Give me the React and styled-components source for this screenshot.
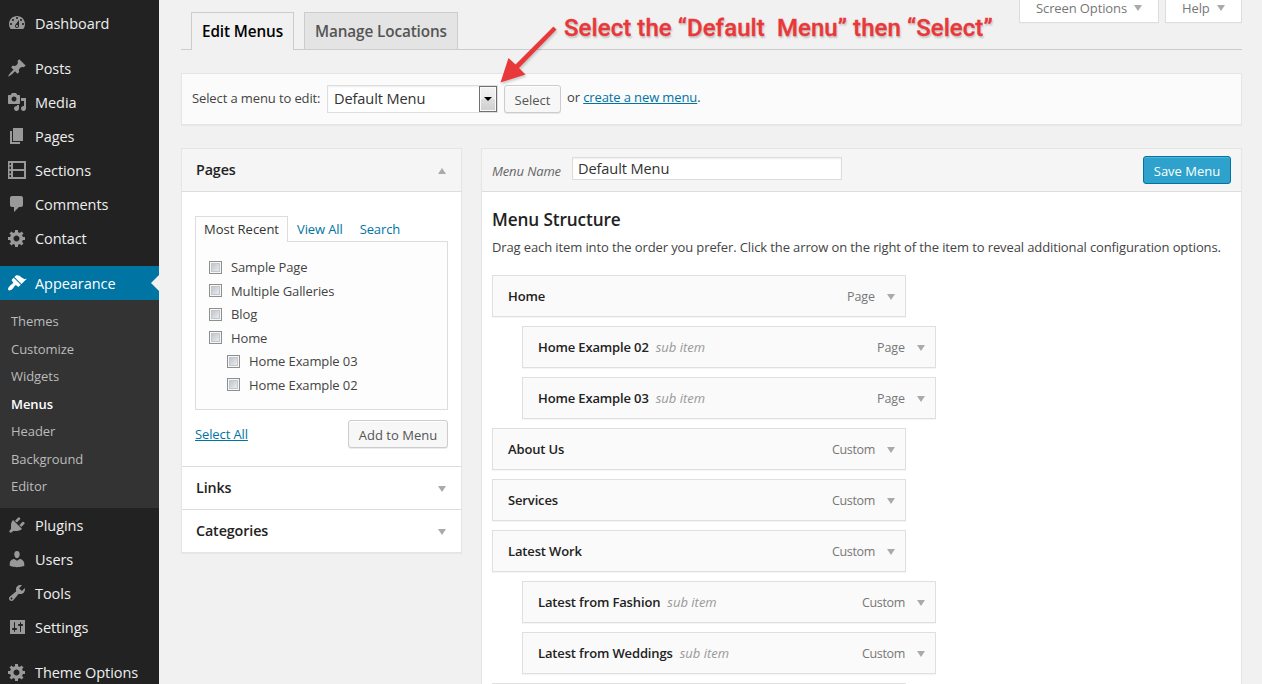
import React from "react";
import styled, { createGlobalStyle, css } from "styled-components";

const Global = createGlobalStyle`
  *, *::before, *::after { box-sizing: border-box; }
  html, body { margin: 0; padding: 0; }
  body {
    background: #f1f1f1;
    color: #444;
    font: 13px/18px "Open Sans", "Noto Sans", sans-serif;
    letter-spacing: -0.115px;
    overflow: hidden;
  }
  h2, h3, p, ul { margin: 0; padding: 0; font-weight: 400; }
  ul { list-style: none; }
`;

const Shell = styled.div`
  position: relative;
  display: flex;
  width: 1262px;
  height: 684px;
  overflow: hidden;
`;

const Sidebar = styled.nav`
  flex: none;
  width: 159px;
  height: 700px;
  padding-top: 6px;
  background: #222;
  letter-spacing: -0.05px;
`;

const MenuGroup = styled.div`
  margin-bottom: 11px;
`;

const MenuLink = styled.div`
  position: relative;
  display: flex;
  align-items: center;
  height: 34px;
  padding-left: 7px;
  gap: 8px;
  font-size: 14.5px;
  line-height: 34px;
  color: ${(p) => (p.$current ? "#fff" : "#eee")};
  background: ${(p) => (p.$current ? "#0074a2" : "transparent")};
  svg { flex: none; fill: ${(p) => (p.$current ? "#fff" : "#999")}; }
`;

const MenuText = styled.span`
  padding-top: 1px;
  line-height: 33px;
`;

const CurrentNotch = styled.span`
  position: absolute;
  right: 0;
  top: 9px;
  border: 8px solid transparent;
  border-left: 0;
  border-right-color: #f1f1f1;
`;

const SubMenu = styled.ul`
  height: 208px;
  padding: 7px 0 0 11px;
  background: #333;
`;

const SubItem = styled.li`
  height: 27.5px;
  line-height: 28px;
  font-size: 13px;
  color: ${(p) => (p.$current ? "#fff" : "#bbb")};
  font-weight: ${(p) => (p.$current ? 600 : 400)};
`;

const Content = styled.main`
  flex: 1;
  min-width: 0;
  display: flex;
  flex-direction: column;
  padding: 0 20px 0 22px;
  > * { flex-shrink: 0; }
`;

const TopBar = styled.header`
  display: flex;
  align-items: flex-end;
  height: 50px;
  padding-left: 10px;
  border-bottom: 1px solid #ccc;
`;

const NavTab = styled.a`
  height: ${(p) => (p.$active ? "38px" : "37px")};
  margin: 0 10px ${(p) => (p.$active ? "-1px" : "0")} 0;
  width: ${(p) => p.$width}px;
  padding: 0 10px;
  border: 1px solid #ccc;
  border-bottom: 0;
  background: ${(p) => (p.$active ? "#f1f1f1" : "#e4e4e4")};
  color: ${(p) => (p.$active ? "#000" : "#555")};
  font-size: 15.3px;
  font-weight: 600;
  line-height: 37px;
  white-space: nowrap;
`;

const ScreenLinks = styled.div`
  align-self: flex-start;
  display: flex;
  gap: 6px;
  margin-left: auto;
`;

const ScreenLink = styled.a`
  display: flex;
  align-items: center;
  justify-content: space-between;
  width: ${(p) => p.$width}px;
  height: 23px;
  padding: 0 16px 6px;
  border: 1px solid #ddd;
  border-top: 0;
  background: #fff;
  box-shadow: 0 1px 1px -1px rgba(0, 0, 0, 0.1);
  color: #777;
  white-space: nowrap;
`;

const Caret = styled.span`
  flex: none;
  width: 0;
  height: 0;
  border: 4px solid transparent;
  ${(p) =>
    p.$up
      ? css`border-top: 0; border-bottom: 6px solid #aaa;`
      : css`border-bottom: 0; border-top: 6px solid #aaa;`}
`;

const ManageBar = styled.section`
  display: flex;
  align-items: center;
  height: 52px;
  margin-top: 23px;
  padding: 0 10px;
  border: 1px solid #e5e5e5;
  background: #fbfbfb;
  box-shadow: 0 1px 1px rgba(0, 0, 0, 0.04);
  white-space: nowrap;
`;

const ManageLabel = styled.span`
  width: 129px;
  padding-bottom: 2px;
`;

const SelectBox = styled.div`
  display: flex;
  align-items: stretch;
  width: 171px;
  height: 28px;
  margin: 0 6px 0 6px;
  border: 1px solid #ddd;
  background: #fff;
  box-shadow: inset 0 1px 2px rgba(0, 0, 0, 0.07);
  color: #333;
  font-size: 14.6px;
  line-height: 25px;
`;

const SelectValue = styled.span`
  flex: 1;
  padding-left: 6px;
`;

const SelectArrow = styled.span`
  display: flex;
  align-items: center;
  justify-content: center;
  width: 18px;
  border: 1px solid #707070;
  background: linear-gradient(#f2f2f2 0%, #ebebeb 50%, #dddddd 50%, #cfcfcf 100%);
  box-shadow: inset 0 0 0 1px #fafafa;
  &::after {
    content: "";
    border: 4px solid transparent;
    border-top-color: #000;
    border-bottom: 0;
  }
`;

const Button = styled.button`
  height: 28px;
  width: ${(p) => p.$width}px;
  padding: 1px 0 0;
  border: 1px solid ${(p) => (p.$primary ? "#0074a2" : "#ccc")};
  border-radius: 3px;
  background: ${(p) => (p.$primary ? "#2ea2cc" : "#f7f7f7")};
  box-shadow: ${(p) =>
    p.$primary
      ? "inset 0 1px 0 rgba(120, 200, 230, 0.5)"
      : "inset 0 1px 0 #fff, 0 1px 0 rgba(0, 0, 0, 0.08)"};
  color: ${(p) => (p.$primary ? "#fff" : "#555")};
  font: 13px/26px "Open Sans", "Noto Sans", sans-serif;
  white-space: nowrap;
`;

const TextLink = styled.a`
  color: #0074a2;
  text-decoration: underline;
`;

const OrText = styled.span`
  margin: -5px 0 0 6px;
`;

const Columns = styled.div`
  display: flex;
  align-items: flex-start;
  gap: 19px;
  margin-top: 23px;
`;

const Accordion = styled.aside`
  flex: none;
  width: 281px;
  border: 1px solid #e5e5e5;
  background: #fff;
  box-shadow: 0 1px 1px rgba(0, 0, 0, 0.04);
`;

const AccordionHead = styled.h3`
  display: flex;
  align-items: center;
  justify-content: space-between;
  height: ${(p) => (p.$first ? "42px" : "43px")};
  padding: 0 15px ${(p) => (p.$first ? "0" : "1px")} 14px;
  border-top: ${(p) => (p.$first ? "0" : "1px solid #ddd")};
  background: ${(p) => (p.$first ? "#f5f5f5" : "#fff")};
  color: #222;
  font-size: 14.3px;
  font-weight: 600;
  ${Caret} { margin-top: 2px; }
`;

const AccordionBody = styled.div`
  height: 275px;
  padding: 24px 13px 0;
  border-top: 1px solid #ddd;
`;

const TabRow = styled.div`
  display: flex;
  height: 26px;
  line-height: 26px;
  color: #0074a2;
  white-space: nowrap;
`;

const SmallTab = styled.a`
  position: relative;
  padding: 0 8px 0 9px;
  ${(p) =>
    p.$active &&
    css`
      width: 93px;
      padding: 0 8px;
      border: 1px solid #ddd;
      border-bottom: 0;
      background: #fdfdfd;
      color: #333;
      line-height: 25px;
      letter-spacing: -0.02px;
    `}
`;

const CheckPanel = styled.ul`
  height: 169px;
  margin-top: -1px;
  padding: 13.3px 13px 0;
  border: 1px solid #ddd;
  background: #fdfdfd;
`;

const CheckRow = styled.li`
  display: flex;
  align-items: center;
  gap: 9px;
  height: 23.5px;
  margin-left: ${(p) => (p.$child ? "18px" : "0")};
`;

const CheckBox = styled.span`
  width: 13px;
  height: 13px;
  border: 1px solid #8e8f8f;
  background: linear-gradient(135deg, #b5bcc4, #f4f5f6) padding-box;
  box-shadow: inset 0 0 0 1px #f6f6f6, inset 0 0 0 2px #c4c8cc;
`;

const PanelActions = styled.div`
  display: flex;
  align-items: center;
  justify-content: space-between;
  margin-top: 10px;
`;

const Editor = styled.section`
  flex: 1;
  min-width: 0;
  height: 560px;
  border: 1px solid #e5e5e5;
  background: #fff;
  box-shadow: 0 1px 1px rgba(0, 0, 0, 0.04);
`;

const EditorHead = styled.div`
  display: flex;
  align-items: center;
  height: 43px;
  padding: 0 10px;
  border-bottom: 1px solid #ddd;
  background: #f5f5f5;
`;

const NameLabel = styled.label`
  width: 80px;
  padding-top: 2px;
  color: #666;
  font-style: italic;
`;

const NameField = styled.div`
  width: 270px;
  height: 23px;
  margin: -4px auto 0 0;
  padding-left: 5px;
  border: 1px solid #ddd;
  background: #fff;
  box-shadow: inset 0 1px 2px rgba(0, 0, 0, 0.07);
  color: #333;
  font-size: 14.6px;
  line-height: 21px;
`;

const EditorBody = styled.div`
  padding: 17px 10px 0;
`;

const Heading = styled.h2`
  color: #222;
  font-size: 17.2px;
  font-weight: 600;
  line-height: 22px;
`;

const Hint = styled.p`
  margin: 7px 0 19px;
  white-space: nowrap;
`;

const ItemList = styled.ul`
  display: flex;
  flex-direction: column;
  gap: 9px;
`;

const Item = styled.li`
  display: flex;
  align-items: center;
  width: 414px;
  height: 42px;
  margin-left: ${(p) => (p.$sub ? "30px" : "0")};
  padding: 0 10px 0 15px;
  border: 1px solid #dfdfdf;
  background: #fafafa;
  box-shadow: 0 1px 1px rgba(0, 0, 0, 0.04);
  ${Caret} { margin-top: 2px; }
`;

const ItemTitle = styled.span`
  color: #222;
  font-weight: 600;
  letter-spacing: -0.14px;
`;

const SubLabel = styled.span`
  margin-left: 7px;
  color: #999;
  font-style: italic;
  letter-spacing: 0;
`;

const ItemType = styled.span`
  margin: 1px 12px 0 auto;
  color: #777;
  font-size: 12.5px;
  letter-spacing: ${(p) => (p.$tight ? "-0.33px" : "-0.05px")};
`;

const Callout = styled.div`
  position: absolute;
  left: 564px;
  top: 12px;
  color: #e8383a;
  font: 500 24px/32px Roboto, sans-serif;
  letter-spacing: 0.07px;
  white-space: pre;
  -webkit-text-stroke: 0.35px #e8383a;
  text-shadow: 1px 2px 2px rgba(0, 0, 0, 0.2);
`;

const CalloutArrow = styled.svg`
  position: absolute;
  left: 494px;
  top: 20px;
  fill: #e8383a;
  filter: drop-shadow(1px 2px 1px rgba(0, 0, 0, 0.18));
`;

const iconPaths = {
  dashboard:
    "M3.76 16h12.48c1.1-1.37 1.76-3.11 1.76-5 0-4.42-3.58-8-8-8s-8 3.58-8 8c0 1.89.66 3.63 1.76 5zM10 4c.55 0 1 .45 1 1s-.45 1-1 1-1-.45-1-1 .45-1 1-1zM6 6c.55 0 1 .45 1 1s-.45 1-1 1-1-.45-1-1 .45-1 1-1zm8 0c.55 0 1 .45 1 1s-.45 1-1 1-1-.45-1-1 .45-1 1-1zm-5.37 5.55L12 7v6c0 1.1-.9 2-2 2s-2-.9-2-2c0-.57.24-1.08.63-1.45zM4 10c.55 0 1 .45 1 1s-.45 1-1 1-1-.45-1-1 .45-1 1-1zm12 0c.55 0 1 .45 1 1s-.45 1-1 1-1-.45-1-1 .45-1 1-1zm-5 3c0-.55-.45-1-1-1s-1 .45-1 1 .45 1 1 1 1-.45 1-1z",
  pin: "M10.44 3.02l1.82-1.82 6.36 6.35-1.83 1.82c-1.05-.68-2.48-.57-3.41.36l-.75.75c-.92.93-1.04 2.35-.35 3.41l-1.83 1.82-2.41-2.41-2.8 2.79c-.42.42-3.38 2.71-3.8 2.29s1.86-3.39 2.28-3.81l2.79-2.79L4.1 9.36l1.83-1.82c1.05.69 2.48.57 3.4-.36l.75-.75c.93-.92 1.05-2.35.36-3.41z",
  media:
    "M13 11V4c0-.55-.45-1-1-1h-1.67L9 1H5L3.67 3H2c-.55 0-1 .45-1 1v7c0 .55.45 1 1 1h10c.55 0 1-.45 1-1zM7 4.5c1.38 0 2.5 1.12 2.5 2.5S8.38 9.5 7 9.5 4.5 8.38 4.5 7 5.62 4.5 7 4.5zM14 6h5v10.5c0 1.38-1.12 2.5-2.5 2.5S14 17.88 14 16.5s1.12-2.5 2.5-2.5c.17 0 .34.02.5.05V9h-3V6zm-4 8.05V13h2v3.5c0 1.38-1.12 2.5-2.5 2.5S7 17.88 7 16.5 8.12 14 9.5 14c.17 0 .34.02.5.05z",
  page: "M6 15V2h10v13H6zm-1 1h8v2H3V5h2v11z",
  sections:
    "M1 1h18v18H1zM2.5 3v2h1.5V3zM2.5 6.5v2.5h1.5V6.5zM2.5 11v2.5h1.5V11zM2.5 15v2h1.5v-2zM6 3v6h11V3zM6 11v6h11v-6z",
  comment:
    "M5 2h9c1.1 0 2 .9 2 2v7c0 1.1-.9 2-2 2h-2l-5 5v-5H5c-1.1 0-2-.9-2-2V4c0-1.1.9-2 2-2z",
  gear: "M18 12h-2.18c-.17.7-.44 1.35-.81 1.93l1.54 1.54-2.1 2.1-1.54-1.54c-.58.36-1.23.63-1.91.79V19H8v-2.18c-.68-.16-1.33-.43-1.91-.79l-1.54 1.54-2.12-2.12 1.54-1.54c-.36-.58-.63-1.23-.79-1.91H1V9.03h2.17c.16-.7.44-1.35.8-1.94L2.43 5.55l2.1-2.1 1.54 1.54c.58-.37 1.24-.64 1.93-.81V2h3v2.18c.68.16 1.33.43 1.91.79l1.54-1.54 2.12 2.12-1.54 1.54c.36.59.64 1.24.8 1.94H18V12zm-8.5 1.5c1.66 0 3-1.34 3-3s-1.34-3-3-3-3 1.34-3 3 1.34 3 3 3z",
  brush:
    "M14.48 11.06L7.41 3.99l1.5-1.5c.5-.56 2.3-.47 3.51.32 1.21.8 1.43 1.28 2.91 2.1 1.18.64 2.45 1.26 4.45.85zm-.71.71L6.7 4.7 4.93 6.47c-.39.39-.39 1.02 0 1.41l1.06 1.06c.39.39.39 1.03 0 1.42-.6.6-1.43 1.11-2.21 1.69-.35.26-.7.53-1.01.84C1.43 14.23.4 16.08 1.4 17.07c.99 1 2.84-.03 4.18-1.36.31-.31.58-.66.85-1.02.57-.78 1.08-1.61 1.69-2.21.39-.39 1.02-.39 1.41 0l1.06 1.06c.39.39 1.02.39 1.41 0z",
  plug: "M13.11 4.36L9.87 7.6 8 5.73l3.24-3.24c.35-.34 1.05-.2 1.56.32.52.51.66 1.21.31 1.55zm-8 1.77l.91-1.12 9.01 9.01-1.19.84c-.71.71-2.63 1.16-3.82 1.16H6.14L4.9 17.26c-.59.59-1.54.59-2.12 0-.59-.58-.59-1.53 0-2.12l1.24-1.24v-3.88c0-1.13.4-3.19 1.09-3.89zm7.26 3.97l3.24-3.24c.34-.35 1.04-.21 1.55.31.52.51.66 1.21.31 1.55l-3.24 3.25z",
  user: "M10 9.25c-2.27 0-2.73-3.44-2.73-3.44C7 4.02 7.82 2 9.97 2c2.16 0 2.98 2.02 2.71 3.81 0 0-.41 3.44-2.68 3.44zm0 2.57L12.72 10c2.39 0 4.52 2.33 4.52 4.53v2.49s-3.65 1.13-7.24 1.13c-3.65 0-7.24-1.13-7.24-1.13v-2.49c0-2.25 1.94-4.48 4.47-4.48z",
  wrench:
    "M16.68 9.77c-1.34 1.34-3.3 1.67-4.95.99l-5.41 6.52c-.99.99-2.59.99-3.58 0s-.99-2.59 0-3.57l6.52-5.42c-.68-1.65-.35-3.61.99-4.95 1.28-1.28 3.12-1.62 4.72-1.06l-2.89 2.89 2.82 2.82 2.86-2.87c.53 1.58.18 3.39-1.08 4.65zM3.81 16.21c.4.39 1.04.39 1.43 0 .4-.4.4-1.04 0-1.43-.39-.4-1.03-.4-1.43 0-.39.39-.39 1.03 0 1.43z",
  sliders:
    "M18 17V3H3v14h15zM8 11h1c.55 0 1 .45 1 1s-.45 1-1 1H8v1.5c0 .28-.22.5-.5.5s-.5-.22-.5-.5V13H6c-.55 0-1-.45-1-1s.45-1 1-1h1V5.5c0-.28.22-.5.5-.5s.5.22.5.5V11zm5-2h-1c-.55 0-1-.45-1-1s.45-1 1-1h1V5.5c0-.28.22-.5.5-.5s.5.22.5.5V7h1c.55 0 1 .45 1 1s-.45 1-1 1h-1v5.5c0 .28-.22.5-.5.5s-.5-.22-.5-.5V9z",
};

const Icon = ({ name }) => (
  <svg width="20" height="20" viewBox="0 0 20 20" aria-hidden="true">
    <path fillRule="evenodd" d={iconPaths[name]} />
  </svg>
);

const menuTop = [
  ["pin", "Posts"],
  ["media", "Media"],
  ["page", "Pages"],
  ["sections", "Sections"],
  ["comment", "Comments"],
  ["gear", "Contact"],
];
const menuBottom = [
  ["plug", "Plugins"],
  ["user", "Users"],
  ["wrench", "Tools"],
  ["sliders", "Settings"],
];
const subItems = ["Themes", "Customize", "Widgets", "Menus", "Header", "Background", "Editor"];
const pages = [
  ["Sample Page"],
  ["Multiple Galleries"],
  ["Blog"],
  ["Home"],
  ["Home Example 03", true],
  ["Home Example 02", true],
];
const items = [
  ["Home", "Page"],
  ["Home Example 02", "Page", true],
  ["Home Example 03", "Page", true],
  ["About Us", "Custom"],
  ["Services", "Custom"],
  ["Latest Work", "Custom"],
  ["Latest from Fashion", "Custom", true],
  ["Latest from Weddings", "Custom", true],
  ["", ""],
];

const MenuEntry = ({ icon, label, current }) => (
  <MenuLink $current={current}>
    <Icon name={icon} />
    <MenuText>{label}</MenuText>
    {current && <CurrentNotch />}
  </MenuLink>
);

export default function App() {
  return (
    <>
      <Global />
      <Shell>
        <Sidebar>
          <MenuGroup>
            <MenuEntry icon="dashboard" label="Dashboard" />
          </MenuGroup>
          <MenuGroup>
            {menuTop.map(([icon, label]) => (
              <MenuEntry key={label} icon={icon} label={label} />
            ))}
          </MenuGroup>
          <MenuGroup>
            <MenuEntry icon="brush" label="Appearance" current />
            <SubMenu>
              {subItems.map((s) => (
                <SubItem key={s} $current={s === "Menus"}>{s}</SubItem>
              ))}
            </SubMenu>
            {menuBottom.map(([icon, label]) => (
              <MenuEntry key={label} icon={icon} label={label} />
            ))}
          </MenuGroup>
          <MenuEntry icon="gear" label="Theme Options" />
        </Sidebar>

        <Content>
          <TopBar>
            <NavTab $active $width={103}>Edit Menus</NavTab>
            <NavTab $width={154}>Manage Locations</NavTab>
            <ScreenLinks>
              <ScreenLink $width={140}>Screen Options <Caret /></ScreenLink>
              <ScreenLink $width={77}>Help <Caret /></ScreenLink>
            </ScreenLinks>
          </TopBar>

          <ManageBar>
            <ManageLabel>Select a menu to edit:</ManageLabel>
            <SelectBox>
              <SelectValue>Default Menu</SelectValue>
              <SelectArrow />
            </SelectBox>
            <Button $width={57}>Select</Button>
            <OrText>or <TextLink>create a new menu</TextLink>.</OrText>
          </ManageBar>

          <Columns>
            <Accordion>
              <AccordionHead $first>Pages <Caret $up /></AccordionHead>
              <AccordionBody>
                <TabRow>
                  <SmallTab $active>Most Recent</SmallTab>
                  <SmallTab>View All</SmallTab>
                  <SmallTab>Search</SmallTab>
                </TabRow>
                <CheckPanel>
                  {pages.map(([label, child]) => (
                    <CheckRow key={label} $child={child}>
                      <CheckBox />
                      {label}
                    </CheckRow>
                  ))}
                </CheckPanel>
                <PanelActions>
                  <TextLink>Select All</TextLink>
                  <Button $width={100}>Add to Menu</Button>
                </PanelActions>
              </AccordionBody>
              <AccordionHead>Links <Caret /></AccordionHead>
              <AccordionHead>Categories <Caret /></AccordionHead>
            </Accordion>

            <Editor>
              <EditorHead>
                <NameLabel>Menu Name</NameLabel>
                <NameField>Default Menu</NameField>
                <Button $width={88} $primary>Save Menu</Button>
              </EditorHead>
              <EditorBody>
                <Heading>Menu Structure</Heading>
                <Hint>
                  Drag each item into the order you prefer. Click the arrow on the right of the item to reveal
                  additional configuration options.
                </Hint>
                <ItemList>
                  {items.map(([title, type, sub], i) => (
                    <Item key={i} $sub={sub}>
                      <ItemTitle>{title}</ItemTitle>
                      {sub && <SubLabel>sub item</SubLabel>}
                      <ItemType $tight={type === "Custom"}>{type}</ItemType>
                      <Caret />
                    </Item>
                  ))}
                </ItemList>
              </EditorBody>
            </Editor>
          </Columns>
        </Content>

        <CalloutArrow width="70" height="70" viewBox="0 0 70 70" aria-hidden="true">
          <path d="M59.5 6.500L62.500 9.500L25 48L31.500 54.500L6.500 62.500L14.500 38L21.500 44.500Z" />
        </CalloutArrow>
        <Callout>{"Select the “Default  Menu” then “Select”"}</Callout>
      </Shell>
    </>
  );
}
